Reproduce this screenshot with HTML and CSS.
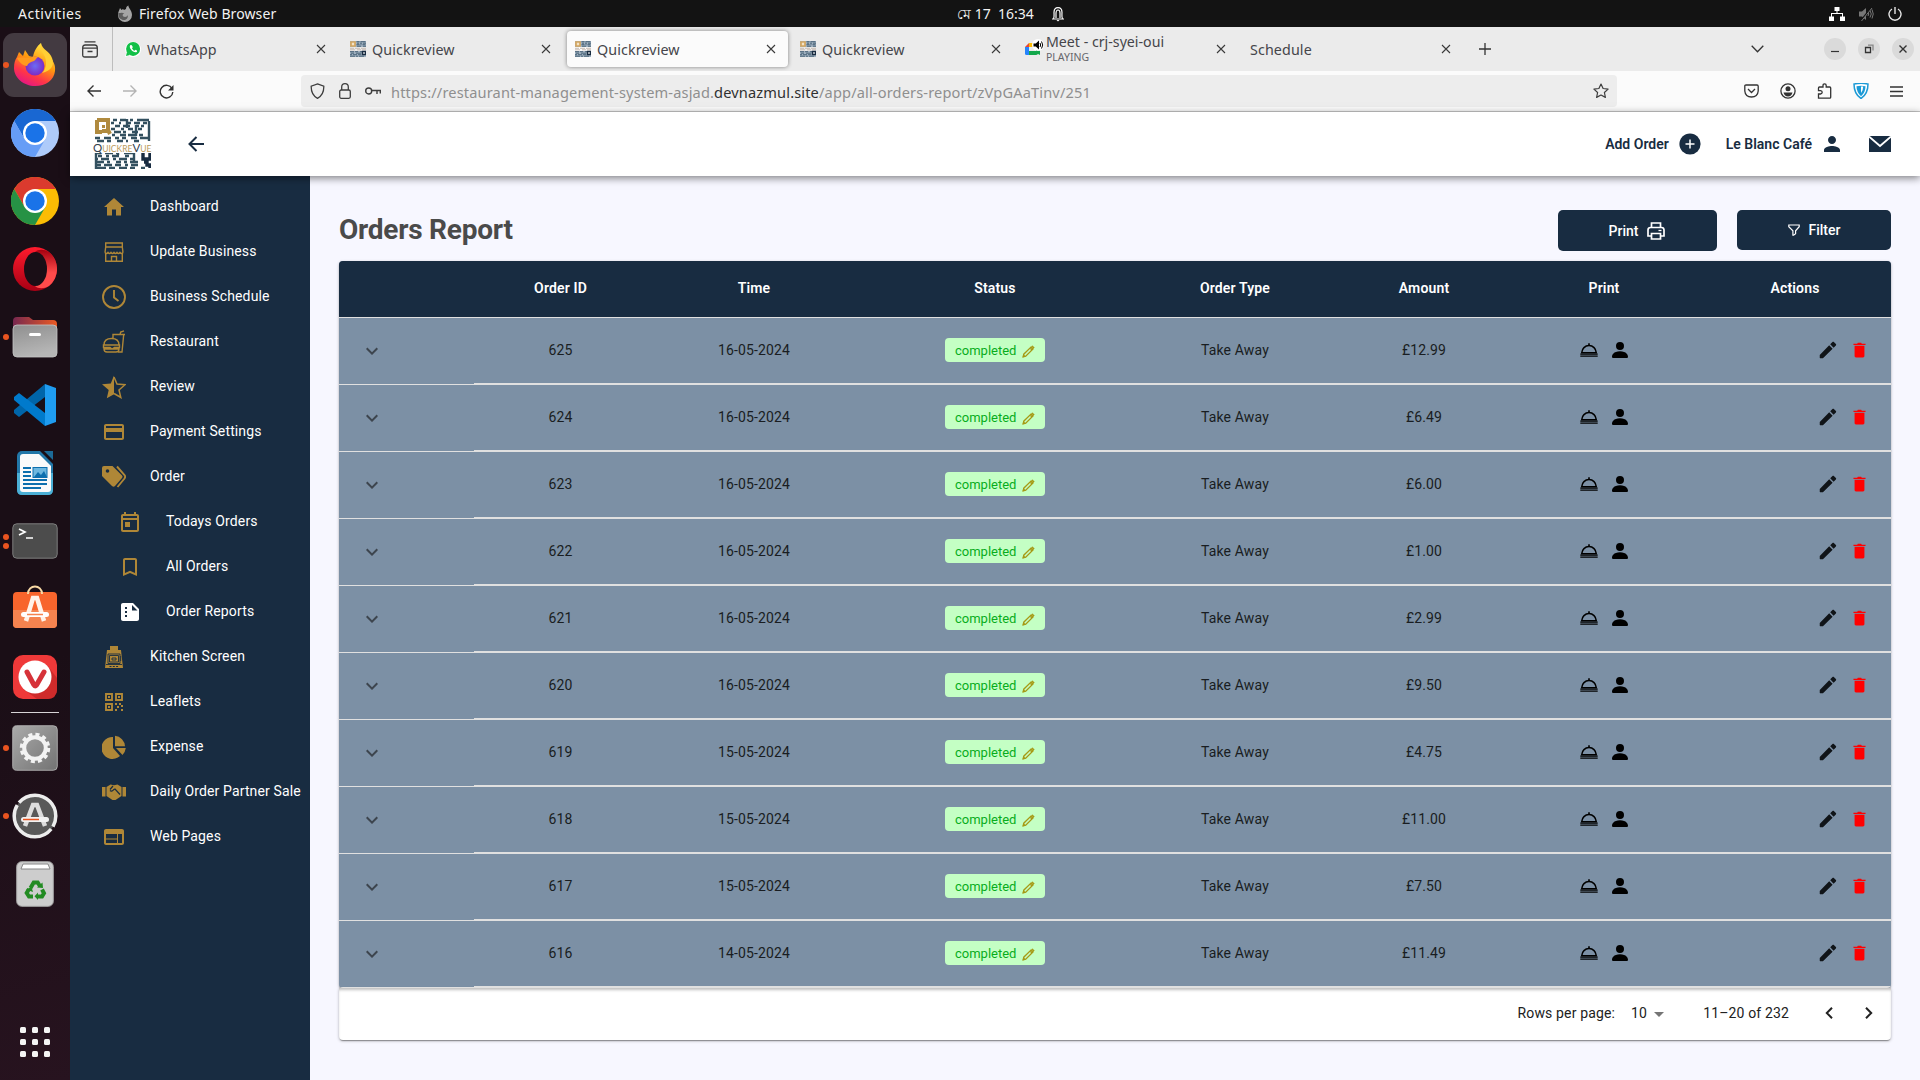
FILE: index.html
```html
<!DOCTYPE html>
<html lang="en">
<head>
<meta charset="utf-8">
<title>Orders Report</title>
<link rel="stylesheet" href="styles.css">
</head>
<body>
<svg class="defs" width="0" height="0">
  <defs>
    <symbol id="x" viewBox="0 0 10 10"><path d="M1 1l8 8M9 1L1 9" fill="none" stroke="#3a3a3a" stroke-width="1.1"/></symbol>
    <symbol id="qr" viewBox="0 0 58 52">
      <g fill="none" stroke="#33505f" stroke-width="2.4">
        <path d="M20 3h4m3 0h6m4 0h3m4 0h12M18 6h3m5 0h2m5 0h5m3 0h6m3 0h4M22 9h5m3 0h7m6 0h3m2 0h3M18 12h4m6 0h3m4 0h5m5 0h4M21 15h7m2 0h3m6 0h6M19 18h3m5 0h6m2 0h8m3 0h4M2 21h5m4 0h7m4 0h4m3 0h4m5 0h6m3 0h9M4 24h7m3 0h4m6 0h6m3 0h2m6 0h5"/>
        <path d="M2 36h6m4 0h8m3 0h3m5 0h9M5 39h4m4 0h3m3 0h7m6 0h4M2 42h3m3 0h8m4 0h3m3 0h8m3 0h5M2 45h9m3 0h3m6 0h5m3 0h3m3 0h8M4 48h4m3 0h8m3 0h6m4 0h3m3 0h7M2 51h11m3 0h6m4 0h8m3 0h5m6 0h4"/>
        <path d="M56 4v20M3 34v18M25 33v5M41 36v9M34 2v9M43 8v11"/>
      </g>
      <path d="M4 3h11v11h-6M4 3v12h5M15 13l2 4" fill="none" stroke="#b08a3e" stroke-width="4"/>
      <path d="M9 8h3v3H9z" fill="#b08a3e"/>
      <path d="M50 34h7v8h-7zM51 45h3v3h3v3" fill="none" stroke="#182c41" stroke-width="3.4"/>
    </symbol>
    <symbol id="fav" viewBox="0 0 16 16">
      <path d="M0 0h16v6H0zM0 10h16v6H0z" fill="#9fb0bf"/>
      <path d="M6.500.700h3m1 0h5M7 2.200h2m1 0h2m1 0h3M6.500 3.700h3m1 0h1m1 0h3M7 5.200h4m2 0h3M0 10.700h4m1 0h3m2 0h2M1 12.200h3m2 0h5m1 0h2M0 13.700h2m1 0h4m1 0h3M0 15.200h5m1 0h2m1 0h5" stroke="#4a6479" stroke-width="1" fill="none"/>
      <path d="M1 1h4v4H1z" fill="#f2e3c8" stroke="#d5a760" stroke-width="1.700"/>
      <path d="M0 7.300h4m1 0h5m1 0h5M0 8.800h5m2 0h4m1 0h4" stroke="#c9bdb4" stroke-width="1"/><path d="M12.500 10.500h3v3h-3z" fill="#fff" stroke="#182c41" stroke-width="1.500"/>
    </symbol>
    <symbol id="chev" viewBox="0 0 24 24"><path d="M7.410 8.590L12 13.170l4.590-4.580L18 10l-6 6-6-6z" fill="#3d454e"/></symbol>
    <symbol id="pen" viewBox="0 0 24 24"><path d="M3 17.500V20.500c0 .3.200.5.500.5H6.500L17 10.600l-3.700-3.700zM18.100 9.500l2.500-2.500c.5-.5.500-1 0-1.500l-2.200-2.200c-.4-.4-1-.4-1.500 0l-2.500 2.500z" fill="#101418"/></symbol>
    <symbol id="penout" viewBox="0 0 14 14"><path d="M1.200 12.800l.7-2.900 7.800-7.700 2.100 2.100-7.800 7.700zM8.600 3.200l2.200 2.200" fill="none" stroke="#a69a16" stroke-width="1.400"/><path d="M10.200 1.700l1-1 2.100 2.100-1 1zM1 13l1-2.500L3.500 12z" fill="#a69a16" stroke="#a69a16" stroke-width=".5"/></symbol>
    <symbol id="bin" viewBox="0 0 14 16"><path d="M.5 1.200h4L5.200.1h3.600l.7 1.100h4v1.300H.5zM1.700 3.400h10.600v11c0 .9-.6 1.600-1.500 1.600H3.200c-.9 0-1.500-.7-1.500-1.600z" fill="red"/></symbol>
    <symbol id="bell" viewBox="0 0 18 14"><path d="M1.700 9.700C2 5.600 5 2.600 9 2.600s7 3 7.300 7.100z" fill="none" stroke="#000" stroke-width="1.500"/><path d="M.3 10.400h17.400v1.300H.3zM.3 12.600h17.400v1.200H.3zM8.200.3h1.600v2H8.200z"/></symbol>
    <symbol id="user" viewBox="2 2 12 12"><path d="M3 14s-1 0-1-1 1-4 6-4 6 3 6 4-1 1-1 1H3zm5-6a3 3 0 1 0 0-6 3 3 0 0 0 0 6z"/></symbol>
  </defs>
</svg>

<header class="topbar">
  <div class="top-left"><span class="activities">Activities</span>
    <svg width="16" height="18" viewBox="0 0 16 18"><path d="M3 3l1.500 2L6 4l1 1 2-1c0-2 1-3 2.500-3.500C11 3 15 5 15 10a7 7 0 0 1-14 0c0-3 1-4 2-7z" fill="#a5a5a5"/><path d="M1.300 8c2 0 4-1 6 .5-2 .5-2 2-1 3 1.500 1 4 .5 4.500-1.500.5 3-1.500 5-4 5S1 13 1.300 8z" fill="#5d5d5d"/></svg>
    <span>Firefox Web Browser</span></div>
  <div class="top-mid"><span class="clock" lang="bn">মে 17&nbsp; 16:34</span>
    <svg width="14" height="16" viewBox="0 0 14 16" fill="none" stroke="#fff" stroke-width="1.200"><path d="M1 13h12M2.500 12.500C3.500 11 3 9 3 6.500 3 3.500 4.800 1.600 7 1.600s4 1.900 4 4.900c0 2.500-.5 4.500.5 6M5 12V7c0-4 4-4 4 0v5"/><path d="M5.500 14h3L7 15.500z" fill="#fff" stroke="none"/></svg></div>
  <div class="top-right">
    <svg width="16" height="14" viewBox="0 0 16 14" fill="#fff"><path d="M5.500 0h5v4h-5zM0 9.500h5V14H0zM11 9.500h5V14h-5zM7.500 4h1v2h5.500v3.500h-1V7H3v2.500H2V6h5.500z"/></svg>
    <svg width="15" height="14" viewBox="0 0 15 14" fill="none" stroke="#777"><path d="M0 4.500h3l4-3.500v12l-4-3.500H0z" fill="#777" stroke="none"/><path d="M9 5q1.500 2 0 4M11 3.500q2.500 3.500 0 7M13 2.500q2.500 4.500 0 9"/><path d="M1.500 14L12 1" stroke="#131313" stroke-width="1.500"/><path d="M2.500 14L13 1"/></svg>
    <svg width="14" height="14" viewBox="0 0 14 14" fill="none" stroke="#e6e6e6" stroke-width="1.400"><path d="M4 2a6 6 0 1 0 6 0M7 0v7"/></svg>
  </div>
</header>

<div class="desktop">
<nav class="dock">
  <div class="slot active"><i class="dot"></i>
    <svg width="44" height="44" viewBox="0 0 44 44"><defs><linearGradient id="ff" x1=".8" y1="0" x2=".3" y2="1"><stop offset="0" stop-color="#fff44f"/><stop offset=".45" stop-color="#ff980e"/><stop offset=".75" stop-color="#ff3647"/><stop offset="1" stop-color="#e31587"/></linearGradient><radialGradient id="fp"><stop offset="0" stop-color="#6a6cf5"/><stop offset="1" stop-color="#7d2bc4"/></radialGradient></defs><path d="M4 15l2-5 4 4 2-6 4 6 4 1c1-6 4-11 8-14 0 7 3 9 7 12 4 4 8 9 7 16-1 9-9 15-20 15S1 36 1 26c0-5 1-8 3-11z" fill="url(#ff)"/><circle cx="22" cy="24" r="9.500" fill="url(#fp)"/><path d="M4 16c4-1 10 0 13 0 3-2 5-2 8-1-2 1-2 3-4 4-3 1-6 2-7 5-4 0-8-4-10-8z" fill="#ff9a1e"/><path d="M28 1c-2 6 2 9 4 14 2 6 1 12-3 16 9-2 13-8 10-15C37 9 29 8 28 1z" fill="#ffcf35"/></svg></div>
  <div class="slot"><svg width="48" height="48" viewBox="0 0 48 48"><circle cx="24" cy="24" r="24" fill="#aecbfa"/><path d="M3.200 12A24 24 0 0 1 44.800 12H24L13.600 30z" fill="#1967d2"/><path d="M3.200 12A24 24 0 0 0 24 48l10.400-18H13.600z" fill="#669df6"/><circle cx="24" cy="24" r="12" fill="#fff"/><circle cx="24" cy="24" r="9.700" fill="#1a73e8"/></svg></div>
  <div class="slot"><svg width="48" height="48" viewBox="0 0 48 48"><circle cx="24" cy="24" r="24" fill="#fbbc04"/><path d="M3.200 12A24 24 0 0 1 44.800 12H24L13.600 30z" fill="#db3a2e"/><path d="M3.200 12A24 24 0 0 0 24 48l10.400-18H13.600z" fill="#269245"/><circle cx="24" cy="24" r="12" fill="#fff"/><circle cx="24" cy="24" r="9.700" fill="#1a73e8"/></svg></div>
  <div class="slot"><svg width="44" height="44" viewBox="0 0 44 44"><defs><linearGradient id="op" x2="0" y2="1"><stop offset="0" stop-color="#ff1b2d"/><stop offset="1" stop-color="#a70014"/></linearGradient><linearGradient id="oq" x2="0" y2="1"><stop offset="0" stop-color="#a5000f"/><stop offset=".6" stop-color="#ff4b4b"/></linearGradient></defs><circle cx="22" cy="22" r="22" fill="url(#op)"/><path d="M22 5c3-3 9-3 14 0a22 22 0 0 1 0 34c-5 3-11 3-14 0z" fill="url(#oq)"/><ellipse cx="22.500" cy="22" rx="11.500" ry="17" fill="#1a0e16"/></svg></div>
  <div class="slot"><i class="dot"></i><svg width="46" height="42" viewBox="0 0 46 42"><defs><linearGradient id="fo"><stop offset="0" stop-color="#77284f"/><stop offset="1" stop-color="#ea5a24"/></linearGradient><linearGradient id="gr" x2=".3" y2="1"><stop offset="0" stop-color="#8f8f8f"/><stop offset="1" stop-color="#b6b6b6"/></linearGradient></defs><path d="M1 5q0-4 4-4h12l4 3h20q4 0 4 4v10H1z" fill="url(#fo)"/><rect x="1" y="9" width="44" height="32" rx="4" fill="url(#gr)" stroke="#c5c5c5" stroke-width=".8"/><rect x="17" y="17" width="12" height="3" rx="1.500" fill="#fff"/></svg></div>
  <div class="slot"><svg width="42" height="44" viewBox="0 0 42 44"><path d="M31 1v13L5 34l-5-4v-3z" fill="#0065a9"/><path d="M31 43V30L5 10l-5 4v3z" fill="#007acc"/><path d="M31 1l11 4v34l-11 4z" fill="#1f9cf0"/></svg></div>
  <div class="slot"><svg width="38" height="46" viewBox="0 0 38 46"><rect x="1" y="1" width="36" height="44" rx="5" fill="#2277a8"/><path d="M1 23h36v17q0 5-5 5H6q-5 0-5-5z" fill="#4bafd5"/><path d="M4 7q0-3 3-3h16l12 12v23q0 3-3 3H7q-3 0-3-3z" fill="#fafafa"/><path d="M24 1h13v13z" fill="#1a0e16"/><path d="M28 1h9v9z" fill="#1c6a97"/><path d="M7 18h8M7 22h8M7 26h8M7 30h24M7 34h24M7 38h18" stroke="#0d6fae" stroke-width="2"/><rect x="17" y="17.500" width="14" height="10" fill="#6db7df" stroke="#0d6fae"/><path d="M18 27l4-5 3 3 3-4 3 6z" fill="#0d6fae"/></svg></div>
  <div class="slot"><i class="dot twin"></i><svg width="46" height="36" viewBox="0 0 46 36"><rect x=".8" y=".8" width="44.400" height="34.400" rx="4" fill="#4c4c4c" stroke="#7d7d7d"/><path d="M7 6l6 3-6 3M14 15h7" fill="none" stroke="#fff" stroke-width="1.700"/></svg></div>
  <div class="slot raised"><svg width="46" height="44" viewBox="0 0 46 44"><rect x="1" y="7" width="44" height="36" rx="4" fill="#f8652c"/><path d="M1 25h44v14q0 4-4 4H5q-4 0-4-4z" fill="#f5834f"/><path d="M16 9c0-10 14-10 14 0" fill="none" stroke="#f9d9a5" stroke-width="2"/><path d="M14 36l7-23h4l7 23" fill="none" stroke="#fff2e8" stroke-width="4.500"/><rect x="9" y="27" width="28" height="5" rx="2.500" fill="#fff"/><path d="M15 29.500h16" stroke="#f5834f" stroke-width="1.500"/></svg></div>
  <div class="slot"><svg width="44" height="44" viewBox="0 0 44 44"><rect width="44" height="44" rx="10" fill="#ef3939"/><path d="M34 10l10 13v11q0 10-10 10H24L10 34z" fill="#cf2b2b"/><circle cx="22" cy="22" r="16.500" fill="#fff"/><path d="M14 17l7 13q1 2 2.500 0L31 17" fill="none" stroke="#d63239" stroke-width="5" stroke-linecap="round"/></svg></div>
  <div class="dock-line"></div>
  <div class="slot"><i class="dot"></i><svg width="46" height="46" viewBox="0 0 46 46"><defs><linearGradient id="gs" x2="1" y2="1"><stop offset="0" stop-color="#aaa"/><stop offset="1" stop-color="#737373"/></linearGradient></defs><rect x=".7" y=".7" width="44.600" height="44.600" rx="4" fill="url(#gs)" stroke="#bbb" stroke-width=".8"/><circle cx="23" cy="23" r="13.500" fill="none" stroke="#f3f3f3" stroke-width="3.500" stroke-dasharray="4 3.070"/><circle cx="23" cy="23" r="10.800" fill="none" stroke="#f3f3f3" stroke-width="4"/></svg></div>
  <div class="slot"><i class="dot"></i><svg width="46" height="46" viewBox="0 0 46 46"><circle cx="23" cy="23" r="21" fill="#595959"/><circle cx="23" cy="23" r="20.800" fill="none" stroke="#ededed" stroke-width="3.500" stroke-dasharray="62.300 3" stroke-dashoffset="-14"/><path d="M13 33l8-21h4l8 21" fill="none" stroke="#ddd" stroke-width="4.500"/><rect x="9" y="24" width="28" height="5" rx="2.500" fill="#f2f2f2"/><path d="M11 26.500h16" stroke="#e95420" stroke-width="1.500"/></svg></div>
  <div class="slot"><svg width="38" height="46" viewBox="0 0 38 46"><rect x=".7" y=".7" width="36.600" height="44.600" rx="5" fill="#cdcdcd" stroke="#a5a5a5"/><path d="M5 8l2-5h25l2 5z" fill="#fff" stroke="#888"/><g fill="none" stroke="#228b22" stroke-width="4"><path d="M14.500 27l3.200-5.500h4l2.300 3.700M26 28.500l2 3.700-2 3.300h-5M17 35.500h-4l-2.300-3.500 2.300-4"/></g><path d="M21 26.500l6 .5-.5-5.500zM22 31.500v7.500l-3.500-3.700zM10 28.500l5.500-2.500 1.500 5z" fill="#228b22"/></svg></div>
  <svg class="apps" width="30" height="30" viewBox="0 0 30 30" fill="#f4f4f4"><rect width="6" height="6" rx="1.500"/><rect x="12" width="6" height="6" rx="1.500"/><rect x="24" width="6" height="6" rx="1.500"/><rect y="12" width="6" height="6" rx="1.500"/><rect x="12" y="12" width="6" height="6" rx="1.500"/><rect x="24" y="12" width="6" height="6" rx="1.500"/><rect y="24" width="6" height="6" rx="1.500"/><rect x="12" y="24" width="6" height="6" rx="1.500"/><rect x="24" y="24" width="6" height="6" rx="1.500"/></svg>
</nav>

<div class="browser">
  <div class="tabs">
    <div class="tabs-menu"><svg width="16" height="17" viewBox="0 0 16 17" fill="none" stroke="#3a3a3a" stroke-width="1.300"><path d="M2.500.9h11M.7 7q0-3 2.500-3h9.600q2.500 0 2.500 3v7q0 2-2 2H2.700q-2 0-2-2zM.7 7.200h14.600M5.500 10.500h5"/></svg></div>
    <div class="tab first"><svg width="16" height="16" viewBox="0 0 16 16"><path d="M0 16l1-4a8 7.700 0 1 1 3 3z" fill="#fff"/><circle cx="8.100" cy="7.900" r="7" fill="#12c047"/><path d="M1 15l1-4 3 3z" fill="#12c047"/><path d="M5.200 4.200c-2 2.500 3.500 8.500 6.600 6.700.8-1.200.3-1.500-1.300-2.200l-1 1c-1-.3-2-1.300-2.500-2.500l.8-1C7 4 6.500 3.500 5.200 4.200z" fill="#fff"/></svg><span>WhatsApp</span><svg class="x"><use href="#x"/></svg></div>
    <div class="tab"><svg width="16" height="16"><use href="#fav"/></svg><span>Quickreview</span><svg class="x"><use href="#x"/></svg></div>
    <div class="tab current"><svg width="16" height="16"><use href="#fav"/></svg><span>Quickreview</span><svg class="x"><use href="#x"/></svg></div>
    <div class="tab"><svg width="16" height="16"><use href="#fav"/></svg><span>Quickreview</span><svg class="x"><use href="#x"/></svg></div>
    <div class="tab meet"><svg width="19" height="20" viewBox="0 0 19 20"><path d="M0 8l4-4v4z" fill="#ea4335"/><path d="M4 4h8v4H4z" fill="#fbbc04"/><path d="M0 8h4v8H1.500Q0 16 0 14.500z" fill="#2684fc"/><path d="M4 12h7V9l4 3v4l-2-1q-1 1-2 1H4z" fill="#12a84b"/><circle cx="13" cy="6" r="6" fill="#fff"/><path d="M8.500 4.500h2.300L14 1.500v9l-3.200-3H8.500z"/><path d="M15 4q1.400 2 0 4M16.500 2.500q2.500 3.500 0 7" fill="none" stroke="#000"/></svg><span class="two">Meet - crj-syei-oui<small>PLAYING</small></span><svg class="x"><use href="#x"/></svg></div>
    <div class="tab"><span class="bare">Schedule</span><svg class="x"><use href="#x"/></svg></div>
    <svg class="plus" width="12" height="12" viewBox="0 0 12 12"><path d="M6 0v12M0 6h12" stroke="#333" stroke-width="1.300"/></svg>
    <div class="win">
      <svg class="down" width="13" height="8" viewBox="0 0 13 8"><path d="M.7.700l5.800 6 5.800-6" fill="none" stroke="#333" stroke-width="1.300"/></svg>
      <b><svg width="10" height="10" viewBox="0 0 10 10"><path d="M1 7.500h8" stroke="#333" stroke-width="1.200"/></svg></b>
      <b><svg width="10" height="10" viewBox="0 0 10 10" fill="none" stroke="#333" stroke-width="1.300"><path d="M1.500 3.500h5v5h-5z"/><path d="M4 1.200h5v5.300" stroke="#888"/></svg></b>
      <b><svg width="10" height="10" viewBox="0 0 10 10"><path d="M1.500 1.500l7 7M8.500 1.500l-7 7" stroke="#333" stroke-width="1.400"/></svg></b>
    </div>
  </div>

  <div class="toolbar">
    <div class="nav-btns">
      <svg width="14" height="14" viewBox="0 0 14 14" fill="none" stroke="#333" stroke-width="1.400"><path d="M14 7H1M6.500 1.500L1 7l5.500 5.500"/></svg>
      <svg width="14" height="14" viewBox="0 0 14 14" fill="none" stroke="#b4b4b4" stroke-width="1.400"><path d="M0 7h13M7.500 1.500L13 7l-5.500 5.500"/></svg>
      <svg width="15" height="15" viewBox="0 0 15 15" fill="none" stroke="#333" stroke-width="1.400"><path d="M13 4.500A6.300 6.300 0 1 0 13.800 8"/><path d="M14.500 1v5.500H9z" fill="#333" stroke="none"/></svg>
    </div>
    <div class="url">
      <svg width="15" height="16" viewBox="0 0 15 16" fill="none" stroke="#3e3e3e" stroke-width="1.300"><path d="M7.500.9l6.300 2.200c.2 6-1.800 10-6.300 12.200C3 13.100 1 9.100 1.200 3.100z"/></svg>
      <svg width="12" height="16" viewBox="0 0 12 16" fill="none" stroke="#3e3e3e" stroke-width="1.300"><rect x=".7" y="7" width="10.600" height="8.300" rx="1.500"/><path d="M2.700 7V4q0-3.300 3.300-3.300T9.300 4v3"/></svg>
      <svg width="16" height="8" viewBox="0 0 16 8" fill="none" stroke="#3e3e3e" stroke-width="1.400"><circle cx="3.700" cy="4" r="3"/><path d="M6.700 3.500H16M12 3.500V7M15.300 3.500v3"/></svg>
      <span class="addr">https://restaurant-management-system-asjad.<em>devnazmul.site</em>/app/all-orders-report/zVpGAaTinv/251</span>
      <svg class="star" width="16" height="16" viewBox="0 0 16 16" fill="none" stroke="#3e3e3e" stroke-width="1.200" stroke-linejoin="round"><path d="M8 1l2.100 4.500 5 .6-3.700 3.400 1 4.900L8 12l-4.400 2.400 1-4.900L.9 6.100l5-.6z"/></svg>
    </div>
    <div class="tools">
      <svg width="15" height="14" viewBox="0 0 15 14" fill="none" stroke="#333" stroke-width="1.300"><path d="M2 1h11q1.200 0 1.200 1.200V7q-.5 6-6.700 6T.8 7V2.200Q.8 1 2 1z"/><path d="M4 5l3.500 3.500L11 5"/></svg>
      <svg width="16" height="16" viewBox="0 0 16 16"><circle cx="8" cy="8" r="7.100" fill="none" stroke="#333" stroke-width="1.300"/><circle cx="8" cy="5.800" r="2.500" fill="#333"/><path d="M3.500 9.500h9q-1 4-4.500 4t-4.500-4z" fill="#333"/></svg>
      <svg width="15" height="16" viewBox="0 0 15 16" fill="none" stroke="#333" stroke-width="1.300"><path d="M1.500 15.200V11h2q1.700-.3 1.700-1.700T3.500 7.700h-2V5q0-1 1-1H6V2.500Q6 .8 7.600.8T9.200 2.500V4h3.500q1 0 1 1v9.200q0 1-1 1z"/></svg>
      <svg width="16" height="16" viewBox="0 0 16 16"><path d="M1 1q7-1.500 14 0Q15 11 8 15.500 1 11 1 1z" fill="#fff" stroke="#1c9ad6" stroke-width="1.500"/><path d="M3.500 3.200q4.500-1 9 0 0 6-4.500 10Q3.500 9 3.500 3.200z" fill="#1c9ad6"/><path d="M8 3.500h2.200q0 4-2.200 6.500z" fill="#fff"/></svg>
      <svg width="13" height="11" viewBox="0 0 13 11"><path d="M0 1h13M0 5.500h13M0 10h13" stroke="#333" stroke-width="1.300"/></svg>
    </div>
  </div>

  <div class="app">
    <header class="apphead">
      <div class="logo"><svg width="58" height="52"><use href="#qr"/></svg><span><b>Q</b>UICKRE<b>V</b>UE</span></div>
      <svg class="back" width="16" height="16" viewBox="0 0 16 16" fill="none" stroke="#182c41" stroke-width="2"><path d="M16 8H2M8.500 1L1.500 8l7 7"/></svg>
      <div class="head-actions">
        <span class="add">Add Order</span>
        <svg width="22" height="22" viewBox="0 0 22 22"><circle cx="11" cy="11" r="10.600" fill="#182c41"/><path d="M11 6.500v9M6.500 11h9" stroke="#fff" stroke-width="1.500"/></svg>
        <span class="cafe">Le Blanc Café</span>
        <svg width="16" height="16" viewBox="4 4 16 16"><path d="M12 12c2.210 0 4-1.790 4-4s-1.790-4-4-4-4 1.790-4 4 1.790 4 4 4zm0 2c-2.670 0-8 1.340-8 4v2h16v-2c0-2.660-5.330-4-8-4z" fill="#182c41"/></svg>
        <svg class="mail" width="22" height="16" viewBox="0 0 22 16"><path d="M0 0h22v16H0z" fill="#182c41"/><path d="M0 .5l11 9.500 11-9.500" fill="none" stroke="#fff" stroke-width="1.800"/></svg>
      </div>
    </header>

    <div class="work">
    <aside class="side">
      <div class="item"><svg viewBox="0 0 24 24"><path d="M10 20.500v-6h4v6h5V12h3L12 3 2 12h3v8.500z" fill="#af8737"/></svg>Dashboard</div>
      <div class="item"><svg viewBox="0 0 24 24" class="ln"><path d="M3.700 3h16.600v4H3.700zM3.700 7L3 12.500M20.300 7l.7 5.500M3 12.500q1.500 2 3 0 1.500 2 3 0 1.500 2 3 0 1.500 2 3 0 1.500 2 3 0 1.500 2 3 0M3.700 13.500v7.800h16.600v-7.800M9.500 21v-4.500h5V21"/></svg>Update Business</div>
      <div class="item"><svg viewBox="0 0 24 24" class="ln thick"><circle cx="12" cy="12" r="11"/><path d="M12 5v7.500l4.500 3.500"/></svg>Business Schedule</div>
      <div class="item"><svg viewBox="0 0 24 24" class="ln"><path d="M11 8V4.500h12M18 4.500L18.700 2 22 .8M21.700 4.500L20 22h-4M2 15q0-6.500 7.500-6.500T17 15zM1.500 15h16v2.500h-5L10 19l-2-1.500H1.500zM2 19q0 3 3 3h9q3 0 3-3z"/></svg>Restaurant</div>
      <div class="item"><svg viewBox="0 0 24 24"><path d="M12 2l3 7 8 .7-6 5.300 1.800 7.500L12 18.500" fill="none" stroke="#af8737" stroke-width="1.500"/><path d="M12 .5v18.700l-7.200 4L6.700 15 0 9.300l8.800-.8z" fill="#af8737"/></svg>Review</div>
      <div class="item"><svg viewBox="0 0 24 24"><path d="M20 4H4c-1.110 0-1.990.89-1.990 2L2 18c0 1.110.89 2 2 2h16c1.110 0 2-.89 2-2V6c0-1.110-.89-2-2-2zm0 14H4v-6h16v6zm0-10H4V6h16v2z" fill="#af8737"/></svg>Payment Settings</div>
      <div class="item"><svg viewBox="0 0 24 24"><path d="M0 3q0-2 2-2h8.500L20 10.500q1.200 1.200 0 2.500l-7 8q-1.500 1.500-3 0L0 11z" fill="#af8737"/><circle cx="5.500" cy="6" r="1.800" fill="#182c41"/><path d="M15 1.500l7.500 8.500q1.300 1.700 0 3.500L15.500 22" fill="none" stroke="#af8737" stroke-width="1.900"/></svg>Order</div>
      <div class="item sub"><svg viewBox="0 0 24 24"><path d="M19 4h-1V2h-2v2H8V2H6v2H5c-1.110 0-1.990.9-1.990 2L3 20c0 1.100.89 2 2 2h14c1.100 0 2-.9 2-2V6c0-1.100-.9-2-2-2zm0 16H5V10h14v10zm0-12H5V6h14v2zM7 12h5v5H7z" fill="#af8737"/></svg>Todays Orders</div>
      <div class="item sub"><svg viewBox="0 0 24 24"><path d="M17 3H7c-1.100 0-1.990.9-1.990 2L5 21l7-3 7 3V5c0-1.100-.9-2-2-2zm0 15l-5-2.180L7 18V5h10v13z" fill="#af8737"/></svg>All Orders</div>
      <div class="item sub"><svg viewBox="0 0 24 24"><path d="M15 3H5c-1.100 0-2 .9-2 2v14c0 1.100.9 2 2 2h14c1.100 0 2-.9 2-2V9l-6-6zM7 7h2v2H7zm0 4h2v2H7zm0 4h2v2H7zm7-10l5.500 5.500H14z" fill="#fff" fill-rule="evenodd"/></svg>Order Reports</div>
      <div class="item"><svg viewBox="0 0 24 24"><path d="M8 1h8v4h3l2 18H3L5 5h3z" fill="#af8737"/><path d="M6 9h12v9.500H6zM7.500 10.500v6.500h9v-6.500zM10 13h4v2h-4zM18.700 11v5M4 19.500h16" fill="none" stroke="#182c41" stroke-width=".9"/><path d="M7.500 21.500h9" stroke="#182c41" stroke-dasharray="2 1.300"/></svg>Kitchen Screen</div>
      <div class="item"><svg viewBox="0 0 24 24" class="ln thick"><path d="M4 4h6v6H4zM14 4h6v6h-6zM4 14h6v6H4z"/><path d="M6 6h2v2H6zM16 6h2v2h-2zM6 16h2v2H6zM13 13h2v2h-2zM17 13h2v2h-2zM19 15h2v2h-2zM15 16h2v2h-2zM13 19h2v2h-2zM19 19h2v2h-2z" fill="#af8737" stroke="none"/></svg>Leaflets</div>
      <div class="item"><svg viewBox="0 0 24 24" fill="#af8737"><path d="M11 2v11l7 8A11 11 0 1 1 11 2zM13 .8A11 11 0 0 1 23 11.300H13zM14 13h9.800q-.5 4-3.300 7z"/></svg>Expense</div>
      <div class="item"><svg viewBox="0 0 24 24" fill="#af8737"><path d="M0 7h3.500v9.500H0zM20.500 7H24v9.500h-3.500zM4.500 7l4-2.500 3.500.8 3.500-.8L19.500 7v9l-6 4h-3l-6-4z"/><path d="M8 10.500q1.500 1.500 3.500-.7L13 9l5 5.500M11 6L8 9.500" fill="none" stroke="#182c41" stroke-width="1.200"/></svg>Daily Order Partner Sale</div>
      <div class="item"><svg viewBox="0 0 24 24"><path d="M20 4H4c-1.100 0-1.990.9-1.990 2L2 18c0 1.100.9 2 2 2h16c1.100 0 2-.9 2-2V6c0-1.100-.9-2-2-2zM15 18H4v-3.500h11V18zm0-4.500H4V9h11v4.500zm5 4.500h-4V9h4v9z" fill="#af8737"/></svg>Web Pages</div>
    </aside>

    <main class="main">
      <div class="title-row">
        <h1>Orders Report</h1>
        <button class="btn print">Print<svg width="18" height="18" viewBox="0 0 18 18" fill="none" stroke="#fff" stroke-width="1.700"><path d="M4.500 5.500V1h9v4.500M4.500 14H1V8q0-2.500 2.500-2.500h11Q17 5.500 17 8v6h-3.500M4.500 11.500h9V17h-9z"/><path d="M11.500 8.500h3" stroke-width="1.300"/></svg></button>
        <button class="btn filter"><svg width="12" height="12" viewBox="0 0 12 12" fill="none" stroke="#fff" stroke-width="1.200"><path d="M.8 1h10.400v1.700L7.600 6.800v3l-2 1.400H4.900V6.800L.8 2.700z"/></svg>Filter</button>
      </div>

      <div class="table">
        <div class="tr th"><span></span><span>Order ID</span><span>Time</span><span>Status</span><span>Order Type</span><span>Amount</span><span>Print</span><span class="last">Actions</span></div>
        <div class="tr"><span class="ex"><svg><use href="#chev"/></svg></span><span>625</span><span>16-05-2024</span><span><i class="badge">completed<svg><use href="#penout"/></svg></i></span><span>Take Away</span><span>£12.99</span><span class="pr"><svg class="be"><use href="#bell"/></svg><svg class="us"><use href="#user"/></svg></span><span class="ac"><svg class="pe"><use href="#pen"/></svg><svg class="bi"><use href="#bin"/></svg></span></div>
        <div class="tr"><span class="ex"><svg><use href="#chev"/></svg></span><span>624</span><span>16-05-2024</span><span><i class="badge">completed<svg><use href="#penout"/></svg></i></span><span>Take Away</span><span>£6.49</span><span class="pr"><svg class="be"><use href="#bell"/></svg><svg class="us"><use href="#user"/></svg></span><span class="ac"><svg class="pe"><use href="#pen"/></svg><svg class="bi"><use href="#bin"/></svg></span></div>
        <div class="tr"><span class="ex"><svg><use href="#chev"/></svg></span><span>623</span><span>16-05-2024</span><span><i class="badge">completed<svg><use href="#penout"/></svg></i></span><span>Take Away</span><span>£6.00</span><span class="pr"><svg class="be"><use href="#bell"/></svg><svg class="us"><use href="#user"/></svg></span><span class="ac"><svg class="pe"><use href="#pen"/></svg><svg class="bi"><use href="#bin"/></svg></span></div>
        <div class="tr"><span class="ex"><svg><use href="#chev"/></svg></span><span>622</span><span>16-05-2024</span><span><i class="badge">completed<svg><use href="#penout"/></svg></i></span><span>Take Away</span><span>£1.00</span><span class="pr"><svg class="be"><use href="#bell"/></svg><svg class="us"><use href="#user"/></svg></span><span class="ac"><svg class="pe"><use href="#pen"/></svg><svg class="bi"><use href="#bin"/></svg></span></div>
        <div class="tr"><span class="ex"><svg><use href="#chev"/></svg></span><span>621</span><span>16-05-2024</span><span><i class="badge">completed<svg><use href="#penout"/></svg></i></span><span>Take Away</span><span>£2.99</span><span class="pr"><svg class="be"><use href="#bell"/></svg><svg class="us"><use href="#user"/></svg></span><span class="ac"><svg class="pe"><use href="#pen"/></svg><svg class="bi"><use href="#bin"/></svg></span></div>
        <div class="tr"><span class="ex"><svg><use href="#chev"/></svg></span><span>620</span><span>16-05-2024</span><span><i class="badge">completed<svg><use href="#penout"/></svg></i></span><span>Take Away</span><span>£9.50</span><span class="pr"><svg class="be"><use href="#bell"/></svg><svg class="us"><use href="#user"/></svg></span><span class="ac"><svg class="pe"><use href="#pen"/></svg><svg class="bi"><use href="#bin"/></svg></span></div>
        <div class="tr"><span class="ex"><svg><use href="#chev"/></svg></span><span>619</span><span>15-05-2024</span><span><i class="badge">completed<svg><use href="#penout"/></svg></i></span><span>Take Away</span><span>£4.75</span><span class="pr"><svg class="be"><use href="#bell"/></svg><svg class="us"><use href="#user"/></svg></span><span class="ac"><svg class="pe"><use href="#pen"/></svg><svg class="bi"><use href="#bin"/></svg></span></div>
        <div class="tr"><span class="ex"><svg><use href="#chev"/></svg></span><span>618</span><span>15-05-2024</span><span><i class="badge">completed<svg><use href="#penout"/></svg></i></span><span>Take Away</span><span>£11.00</span><span class="pr"><svg class="be"><use href="#bell"/></svg><svg class="us"><use href="#user"/></svg></span><span class="ac"><svg class="pe"><use href="#pen"/></svg><svg class="bi"><use href="#bin"/></svg></span></div>
        <div class="tr"><span class="ex"><svg><use href="#chev"/></svg></span><span>617</span><span>15-05-2024</span><span><i class="badge">completed<svg><use href="#penout"/></svg></i></span><span>Take Away</span><span>£7.50</span><span class="pr"><svg class="be"><use href="#bell"/></svg><svg class="us"><use href="#user"/></svg></span><span class="ac"><svg class="pe"><use href="#pen"/></svg><svg class="bi"><use href="#bin"/></svg></span></div>
        <div class="tr"><span class="ex"><svg><use href="#chev"/></svg></span><span>616</span><span>14-05-2024</span><span><i class="badge">completed<svg><use href="#penout"/></svg></i></span><span>Take Away</span><span>£11.49</span><span class="pr"><svg class="be"><use href="#bell"/></svg><svg class="us"><use href="#user"/></svg></span><span class="ac"><svg class="pe"><use href="#pen"/></svg><svg class="bi"><use href="#bin"/></svg></span></div>
      </div>
      <div class="pager">
        <span class="rpp">Rows per page:</span><span class="ten">10</span>
        <svg class="caret" width="10" height="5" viewBox="0 0 10 5"><path d="M0 0h10L5 5z" fill="#757575"/></svg>
        <span class="range">11–20 of 232</span>
        <svg width="8" height="12" viewBox="0 0 8 12"><path d="M7 .8L1.800 6 7 11.200" fill="none" stroke="#222" stroke-width="2"/></svg>
        <svg class="next" width="8" height="12" viewBox="0 0 8 12"><path d="M1 .8L6.200 6 1 11.200" fill="none" stroke="#222" stroke-width="2"/></svg>
      </div>
    </main>
    </div>
  </div>
</div>
</div>
</body>
</html>
```
FILE: styles.css
```css
* { box-sizing: border-box; }
body { margin: 0; width: 1920px; height: 1080px; overflow: hidden; background: #141414; font-family: Roboto, "Liberation Sans", sans-serif; }
svg { display: block; flex: none; }
.defs { position: absolute; }

/* system bar */
.topbar { height: 27px; background: #131313; color: #f2f2f2; display: grid; grid-template-columns: 1fr auto 1fr; align-items: center; font: 14px/27px "Noto Sans", "Open Sans", sans-serif; }
.top-left { display: flex; align-items: center; padding-left: 18px; letter-spacing: .1px; }
.activities { width: 99px; letter-spacing: .55px; }
.top-left svg { margin-right: 6px; }
.top-mid { display: flex; align-items: center; width: 108px; justify-content: space-between; margin-left: 102px; }
.top-right { display: flex; align-items: center; justify-content: flex-end; gap: 14px; padding-right: 18px; }

.desktop { display: flex; height: 1053px; }

/* dock */
.dock { width: 70px; background: linear-gradient(165deg, #1a0e16 60%, #27131f); display: flex; flex-direction: column; align-items: center; padding-top: 4px; }
.slot { width: 64px; height: 68px; display: flex; align-items: center; justify-content: center; position: relative; }
.slot.active::before { content: ""; position: absolute; inset: 2px 0; border-radius: 11px; background: #433a41; }
.slot svg { position: relative; }
.slot.active svg { margin-bottom: 2px; }
.slot.raised svg { margin-bottom: 5px; }
.dot { position: absolute; left: 0; top: 31px; width: 6px; height: 6px; border-radius: 50%; background: #e95420; z-index: 1; }
.dot.twin { top: 27px; box-shadow: 0 9px 0 #e95420; }
.dock-line { width: 48px; height: 1px; background: #d7d3d6; margin: 1px 0 1px; }
.apps { margin-top: auto; margin-bottom: 23px; }

/* browser chrome */
.browser { width: 1850px; display: flex; flex-direction: column; font-family: Roboto, "Liberation Sans", sans-serif; }
.tabs { height: 44px; background: #ebebeb; display: flex; align-items: center; font: 14.300px/20px "Noto Sans", "Open Sans", sans-serif; color: #45454a; }
.tabs-menu { width: 43px; height: 44px; border-right: 1px solid #bdbdbd; padding: 14px 0 0 12px; }
.tab { width: 221px; height: 36px; margin: 0 2px; display: flex; align-items: center; padding: 0 12px 0 8px; border-radius: 4px; }
.tab.first { width: 223px; padding-left: 10px; }
.tab > span { margin: 2px 0 0 6px; flex: 1; white-space: nowrap; letter-spacing: .1px; }
.tab > .bare { margin-left: 0; }
.tab > .two { margin: 0 0 0 2px; line-height: 18px; letter-spacing: 0; font-size: 14.200px; position: relative; top: -1px; }
.two small { display: block; font-size: 10.500px; line-height: 13px; color: #66666b; }
.tab .x { width: 10px; height: 10px; }
.current { background: #fbfbfb; box-shadow: 0 0 4px rgba(0, 0, 0, .45); }
.plus { margin-left: 14px; }
.win { margin-left: auto; display: flex; align-items: center; gap: 12px; padding-right: 6px; }
.win b { width: 22px; height: 22px; border-radius: 50%; background: #dadada; display: grid; place-items: center; }
.down { margin-right: 48px; }
.toolbar { height: 41px; background: #fbfbfb; border-bottom: 1px solid #c9c9c9; display: flex; align-items: center; }
.nav-btns { width: 231px; display: flex; align-items: center; gap: 22px; padding-left: 17px; }
.url { width: 1316px; height: 32px; border-radius: 4px; background: #ededed; display: flex; align-items: center; padding: 0 8px 0 9px; color: #8f8f8f; font: 14.600px/32px "Noto Sans", "Open Sans", sans-serif; }
.addr { letter-spacing: .14px; padding-top: 1px; }
.url svg { margin-right: 14px; }
.url svg:nth-of-type(3) { margin-right: 10px; }
.url em { font-style: normal; color: #303030; }
.url .star { margin: 0 0 0 auto; }
.tools { flex: 1; display: flex; align-items: center; justify-content: flex-end; gap: 21px; padding-right: 17px; }

/* app header */
.app { display: flex; flex-direction: column; height: 968px; background: #f7f7ff; }
.apphead { height: 64px; background: #fff; display: flex; align-items: center; padding: 0 29px 0 23px; position: relative; z-index: 1; box-shadow: 0 2px 8px rgba(0, 0, 0, .5); }
.logo { width: 60px; position: relative; top: -1px; }
.logo span { position: absolute; left: 0; top: 26px; width: 60px; height: 10px; background: #fff; font: 8.500px/10px Lato, sans-serif; color: #b99b5c; }
.logo b { font-weight: 400; font-size: 11.500px; color: #33414d; }
.back { margin-left: 35px; }
.head-actions { margin-left: auto; display: flex; align-items: center; font-size: 14px; font-weight: 600; color: #182c41; }
.add { margin-right: 10px; }
.cafe { margin: 0 12px 0 25px; }
.mail { margin-left: 29px; }

.work { flex: 1; display: flex; }
.side { width: 240px; background: #182c41; padding-top: 8px; }
.item { height: 45px; display: flex; align-items: center; padding-left: 32px; color: #fff; font-size: 14px; letter-spacing: .13px; white-space: nowrap; line-height: 20px; padding-bottom: 1px; }
.item svg { width: 24px; height: 24px; margin-right: 24px; position: relative; top: 1px; }
.item.sub { padding-left: 48px; }
.ln { fill: none; stroke: #af8737; stroke-width: 1.400; }
.ln.thick { stroke-width: 1.900; }

/* report */
.main { flex: 1; padding: 34px 29px 0; }
.title-row { display: flex; height: 51px; align-items: flex-start; }
h1 { margin: 3px auto 0 0; font-size: 28px; line-height: 33px; font-weight: 700; letter-spacing: -.24px; color: #4a4a4a; }
.btn { border: 0; border-radius: 5px; background: #182c41; color: #fff; font: 500 14px/20px Roboto, sans-serif; display: flex; align-items: center; justify-content: center; }
.print { width: 159px; height: 41px; gap: 9px; padding-right: 7px; }
.filter { width: 154px; height: 40px; margin-left: 20px; gap: 9px; }
.table { border-radius: 4px; overflow: hidden; background: #7c90a5; box-shadow: 0 1px 3px rgba(0, 0, 0, .3), 0 2px 1px rgba(0, 0, 0, .15); }
.tr { display: grid; grid-template-columns: 135px 173px 214px 268px 212px 166px 194px 190px; height: 67px; font-size: 14px; letter-spacing: .15px; color: #191d21; }
.tr > span { display: flex; align-items: center; justify-content: center; border-bottom: 2px solid #e0e0e0; padding-bottom: 1px; }
.tr > .ex { border-bottom-width: 1px; justify-content: flex-start; padding: 0 0 0 21px; }
.ex svg { width: 24px; height: 24px; }
.tr.th { height: 57px; background: #182c41; color: #fff; font-weight: 600; }
.tr.th > span { border-bottom-width: 1px; padding-bottom: 2px; }
.tr.th > .last { padding-right: 2px; }
.badge { width: 100px; height: 24px; border-radius: 4px; background: #c4ffc4; color: #08ad1c; font-style: normal; font-size: 13px; display: flex; align-items: center; padding-left: 10px; letter-spacing: 0; }
.badge svg { width: 13px; height: 13px; margin: 2px 0 0 6px; }
.tr > .pr { padding: 0 1px 1px 0; gap: 14px; }
.pr .be { width: 18px; height: 14px; }
.pr .us { width: 16px; height: 16px; }
.tr > .ac { justify-content: flex-end; padding: 0 25px 1px 0; gap: 14px; }
.ac .pe { width: 22px; height: 22px; }
.ac .bi { width: 13px; height: 16px; }
.pager { height: 52px; background: #fff; border-radius: 0 0 4px 4px; box-shadow: 0 1px 3px rgba(0, 0, 0, .3), 0 2px 1px -1px rgba(0, 0, 0, .3), inset 0 3px 3px -1px rgba(0, 0, 0, .25); display: flex; align-items: center; justify-content: flex-end; padding: 0 18px 2px 0; font-size: 14px; letter-spacing: .15px; color: #212121; }
.ten { margin: 0 7px 0 16px; }
.caret { margin-top: 3px; }
.range { margin: 0 36px 0 39px; }
.next { margin-left: 32px; }
```
